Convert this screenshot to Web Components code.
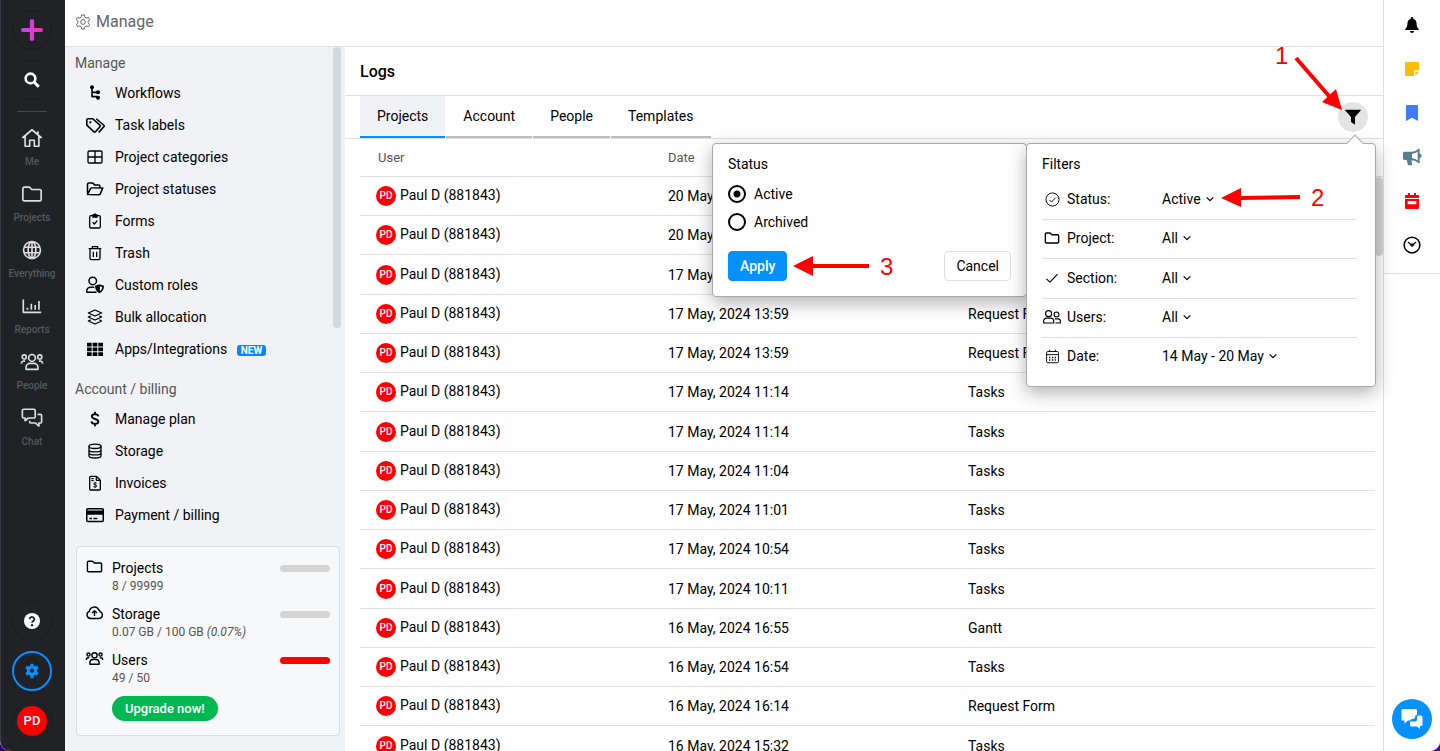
<!DOCTYPE html>
<html lang="en">
<head>
<meta charset="utf-8">
<meta name="viewport" content="width=device-width, initial-scale=1">
<title>Manage - Logs</title>
<style>
    html, body {
        margin: 0;
        height: 100%;
        overflow: hidden;
    }

    body {
        font-family: Roboto, "Liberation Sans", sans-serif;
        font-size: 14px;
        line-height: 20px;
        color: #000;
        background: linear-gradient(90deg, #32006e, #4a0fa8);
        --line: #e0e0e0;
        --blue: #0591ff;
        --panel: #f0f2f5;
        --muted: #555;
    }
</style>
</head>
<body>
<manage-app></manage-app>

<script>
/*
*   Icon shapes, all drawn on a 24 x 24 grid. Outlined by default, solid parts carry class "s".
*/
const ICONS = {
    "plus": `<defs><linearGradient id="g"><stop offset="0" stop-color="#b14dff"/><stop offset="1" stop-color="#ff2fa0"/></linearGradient></defs><path d="M9.700 2.300a2.300 2.300 0 0 1 4.600 0V9.700h7.400a2.300 2.300 0 0 1 0 4.600h-7.400v7.400a2.300 2.300 0 0 1-4.600 0v-7.400H2.300a2.300 2.300 0 0 1 0-4.600h7.400z" fill="url(#g)" stroke="none"/>`,
    "search": `<circle cx="10" cy="10" r="6.500" stroke-width="3.400"/><path d="M15 15l6 6" stroke-width="4"/>`,
    "home": `<path d="M1.500 12L12 3l10.500 9M18.500 8V4.500M4.500 10v11h5v-6.500h5V21h5V10"/>`,
    "folder": `<path d="M2 6a1.500 1.500 0 0 1 1.500-1.500h5.700l2.600 2.600h8.700A1.500 1.500 0 0 1 22 8.600v9.400a1.500 1.500 0 0 1-1.500 1.500h-17A1.500 1.500 0 0 1 2 18z"/>`,
    "globe": `<circle cx="12" cy="12" r="9.200"/><ellipse cx="12" cy="12" rx="4.200" ry="9.200"/><path d="M3.500 9h17M3.500 15h17M12 3v18"/>`,
    "reports": `<path d="M2.500 5v14H22M7 16v-2M11.300 16v-6.500M15.500 16v-5M19.600 16V6.500"/>`,
    "people": `<circle cx="12" cy="7.500" r="3.700"/><circle cx="3.500" cy="6.500" r="2.200"/><circle cx="20.500" cy="6.500" r="2.200"/><path d="M5.500 20v-2a4.500 4.500 0 0 1 4.500-4.500h4a4.500 4.500 0 0 1 4.500 4.500v2zM.500 14v-.500a2.500 2.500 0 0 1 3-2.500h1M23.500 14v-.500a2.500 2.500 0 0 0-3-2.500h-1"/>`,
    "chat": `<path d="M3 2.500h11A1.500 1.500 0 0 1 15.500 4v6.500A1.500 1.500 0 0 1 14 12H8l-3.500 3v-3H3a1.500 1.500 0 0 1-1.500-1.500V4A1.500 1.500 0 0 1 3 2.500zM18 8h3a1.500 1.500 0 0 1 1.500 1.500V16a1.500 1.500 0 0 1-1.500 1.500h-1.500v3.500L16 17.500h-5A1.500 1.500 0 0 1 9.500 16v-1"/>`,
    "help": `<circle class="s" cx="12" cy="12" r="12"/><path d="M8.500 9.300a3.500 3.300 0 1 1 5.500 2.700c-1.300.9-2 1.200-2 2.700" stroke="#202226" stroke-width="2.600"/><circle cx="12" cy="18.300" r="1.800" fill="#202226" stroke="none"/>`,
    "gear-solid": `<path class="s" fill-rule="evenodd" d="M10 1h4l.7 3.200 2 1.100 3.200-1 2 3.500-2.400 2.200v2.900l2.400 2.200-2 3.500-3.200-1-2 1.100L14 23h-4l-.7-4.300-2-1.100-3.200 1-2-3.500 2.400-2.200V10L2.100 7.800l2-3.500 3.200 1 2-1.100zM12 8.200a3.300 3.300 0 1 0 .01 0z"/>`,
    "gear": `<path d="M10 1.500h4l.7 3.200 2.200 1.300 3.100-1 2 3.500-2.400 2.200v2.600l2.400 2.200-2 3.500-3.100-1-2.200 1.300-.7 3.200h-4l-.7-3.200-2.200-1.300-3.100 1-2-3.500 2.400-2.200v-2.600L2 8.500 4 5l3.100 1 2.200-1.300z"/><circle cx="12" cy="12" r="3.500"/>`,
    "workflow": `<path d="M7.500 3v14.500h8.500M7.500 11h8.500" stroke-width="2.400"/><circle class="s" cx="7.500" cy="3.500" r="3"/><circle class="s" cx="16.500" cy="11" r="3"/><circle class="s" cx="16.500" cy="19" r="3"/>`,
    "tags": `<path d="M1 5a1.500 1.500 0 0 1 1.500-1.500H8.500L17.500 11.500a1.500 1.500 0 0 1 0 2.200L12 19.800a1.500 1.500 0 0 1-2.200 0L1 11.500z"/><path d="M13 3.500l9.500 8.200c.7.600.7 1.200 0 1.800L16 20.800"/><circle class="s" cx="5.500" cy="8" r="1.400"/>`,
    "grid": `<rect x="1.500" y="3" width="21" height="18" rx="2"/><path d="M12 3v18M1.500 12h21"/>`,
    "folder-open": `<path d="M2 18V5.500A1.500 1.500 0 0 1 3.500 4H9l2.500 2.500H17A1.500 1.500 0 0 1 18.500 8v2.500M2 19.500l4-8a2 2 0 0 1 1.700-1H22.500l-3.500 8a2 2 0 0 1-1.800 1.200z"/>`,
    "form": `<rect x="4" y="4" width="16" height="18.500" rx="2"/><path class="s" d="M8 2h2.500a1.500 1.500 0 0 1 3 0H16v5H8z"/><path d="M8.500 14l2.500 2.500 4.500-5"/>`,
    "trash": `<path d="M2.500 5.500h19M8 5V2.500h8V5M4.500 5.500V20a2 2 0 0 0 2 2h11a2 2 0 0 0 2-2V5.500M9.500 10v8M14.500 10v8"/>`,
    "roles": `<circle cx="9" cy="6.500" r="5"/><path d="M14 21.500H1V20a5 5 0 0 1 5-5h5"/><path class="s" fill-rule="evenodd" d="M18 11l6 2c0 5-2 8-6 10-4-2-6-5-6-10zM18.500 13.500v6.500c2-1.300 3-3 3-5.500z"/>`,
    "layers": `<path d="M2 6l10-4.500L22 6l-10 4.500zM5.500 10.200L2 12l10 4.500L22 12l-3.500-1.800M5.500 16.200L2 18l10 4.500L22 18l-3.500-1.800"/>`,
    "apps": `<path class="s" d="M0 2.500h7v5.700H0zM8.500 2.500h7v5.700h-7zM17 2.500h7v5.700h-7zM0 9.700h7v5.700H0zM8.500 9.700h7v5.700h-7zM17 9.700h7v5.700h-7zM0 16.800h7v5.700H0zM8.500 16.800h7v5.700h-7zM17 16.800h7v5.700h-7z"/>`,
    "dollar": `<path d="M17 8.200C16.700 6 15 4.900 12 4.900S7.300 6.200 7.300 8.300 9 11.200 12 12s5 1.700 5 3.900-2 3.500-5 3.500-5-1.300-5.300-3.700M12 1v4M12 19v4" stroke-width="2.800"/>`,
    "database": `<ellipse cx="12" cy="5" rx="9" ry="3.300"/><path d="M3 5v14c0 1.800 4 3.500 9 3.500s9-1.700 9-3.500V5M3 10c0 1.800 4 3.300 9 3.300s9-1.500 9-3.300M3 14.500c0 1.800 4 3.300 9 3.300s9-1.500 9-3.300"/>`,
    "invoice": `<path d="M4 3.500A1.500 1.500 0 0 1 5.500 2H14l6 6v13a1.500 1.500 0 0 1-1.500 1.500h-13A1.500 1.500 0 0 1 4 21zM14 2v6h6M6.500 5.500H10M6.500 8.500H10"/><path d="M14.500 12.500c-.5-1-4.700-1.200-4.700.8s5 1 5 3.200-4.500 1.900-5.300.7M12.200 10.500v9" stroke-width="1.300"/>`,
    "card": `<rect x="1" y="3.500" width="22" height="17" rx="1.500"/><path class="s" d="M1 6h22v5.500H1z"/><path d="M4.500 16.500H8M10 16.500h5"/>`,
    "cloud": `<path d="M6.500 20.500a5.300 5.300 0 0 1-1.800-10.200A7 7 0 0 1 17.800 8a5 5 0 0 1 2 2.800 5 5 0 0 1-1.300 9.700zM12 17v-7M8.500 12.800L12 9.500l3.500 3.300"/>`,
    "filter": `<path class="s" d="M.500 1h23c.5 0 .7.500.3 1L15 12v11.500l-6-4V12L.2 2C-.1 1.500 0 1 .500 1z"/>`,
    "circle-check": `<circle cx="12" cy="12" r="10.500"/><path d="M7 12.500l3.500 3.500L17 9"/>`,
    "check": `<path d="M2.500 13.500L8.500 19 21.500 5.500"/>`,
    "users": `<circle cx="7.500" cy="7.500" r="4"/><circle cx="18" cy="8.500" r="3.200"/><path d="M.800 20v-2.500a4 4 0 0 1 4-4h5.500a4 4 0 0 1 4 4V20zM16.500 20h6.700v-2.500a3 3 0 0 0-3-3H16"/>`,
    "calendar": `<rect x="2.500" y="4" width="19" height="18" rx="2"/><path d="M2.500 9h19M7.500 1v3M16.500 1v3"/><path d="M6.500 13.500h2M11 13.500h2M15.500 13.500h2M6.500 17.500h2M11 17.500h2M15.500 17.500h2" stroke-width="2.300"/>`,
    "chevron": `<path d="M4 8l8 8 8-8"/>`,
    "bell": `<path class="s" d="M12 0a1.800 1.800 0 0 1 1.800 1.800v.8c3.400.9 5 3.600 5 6.900 0 4 1 6.500 3.200 8.500.5.500.2 1.500-.7 1.500H2.700c-.9 0-1.200-1-.7-1.500 2.200-2 3.200-4.500 3.200-8.500 0-3.300 1.600-6 5-6.900v-.8A1.800 1.800 0 0 1 12 0zM9 21h6a3 3 0 0 1-6 0z"/>`,
    "note": `<path class="s" d="M2.500 1.500h19a1 1 0 0 1 1 1V14H15v8.500H2.500a1 1 0 0 1-1-1v-19a1 1 0 0 1 1-1zM17 16h5.500L17 22z"/>`,
    "bookmark": `<path class="s" d="M3 1.500A1.500 1.500 0 0 1 4.500 0h15A1.500 1.500 0 0 1 21 1.500V24l-9-5-9 5z"/>`,
    "megaphone": `<path class="s" fill-rule="evenodd" d="M1.500 5H11c4 0 7-1.500 9.500-4a1 1 0 0 1 1.700.7v6a2.500 2.500 0 0 1 0 5.500v6.500a1 1 0 0 1-1.700.7c-2.500-2.500-5.500-4-9-4l.5 5.500c0 .7-.3 1.100-1 1.100H7.500c-.6 0-1-.300-1.100-1L5 16H2.500A2.500 2.500 0 0 1 0 13.500v-6C0 6 .5 5 1.500 5zM12 7.500v6c3 .2 5.500 1.300 7.500 3V4.500c-2 1.800-4.500 2.800-7.500 3z"/>`,
    "calendar-solid": `<path class="s" fill-rule="evenodd" d="M6 0h3v3h6V0h3v3h3.500a1 1 0 0 1 1 1v3.500h-21V4a1 1 0 0 1 1-1H6zM1.500 9h21v13a2 2 0 0 1-2 2h-17a2 2 0 0 1-2-2zM5.500 12v5h13v-5z"/>`,
    "clock": `<circle cx="12" cy="12" r="10.500"/><path d="M6.500 8l5.500 4.500L17.500 8" stroke-width="1.500"/><path class="s" d="M9.500 10h5.500v2.500L12 15l-2.500-2.500z" opacity=".75"/>`,
    "chat-solid": `<path class="s" d="M3 2h12.500A1.500 1.500 0 0 1 17 3.500V8a2 2 0 0 0-2 2 2 2 0 0 1-2 2h-.5a3 3 0 0 0-2.700 1.500H8L4.500 16.500v-3H3A1.500 1.500 0 0 1 1.500 12V3.500A1.500 1.500 0 0 1 3 2zM18.500 8.500H21a1.500 1.500 0 0 1 1.500 1.500v7.500A1.500 1.500 0 0 1 21 19h-1v3L17 19.500h-5.500A1.500 1.500 0 0 1 10 18v-3.500h4.500a2.500 2.500 0 0 0 2.500-2.500v-2a1.500 1.500 0 0 1 1.500-1.500z"/>`
};

// Small helper so every component gets an open shadow root the same way
class BaseElement extends HTMLElement {
    constructor() {
        super();
        this.attachShadow({ mode: "open" });
    }

    connectedCallback() {
        this.shadowRoot.innerHTML = `
            <style>
                * { box-sizing: border-box; }
                a { color: inherit; text-decoration: none; }
                button, input, select { font: inherit; color: inherit; cursor: pointer; }
                button { border: 0; padding: 0; background: none; }
            </style>
            ${this.render()}
        `;
    }

    attr(name, fallback = "") {
        return this.getAttribute(name) || fallback;
    }
}

// <ui-icon name="" size="" stroke="">
class UiIcon extends BaseElement {
    render() {
        const size = this.attr("size", "18");
        return `
            <style>
                :host { display: inline-flex; flex: none; justify-content: center; }
                svg { display: block; overflow: visible; }
                .s { fill: currentColor; stroke: none; }
            </style>
            <svg width="${size}" height="${size}" viewBox="0 0 24 24" fill="none" stroke="currentColor"
                stroke-width="${this.attr("stroke", "2")}" stroke-linejoin="round" aria-hidden="true">
                ${ICONS[this.attr("name")]}
            </svg>
        `;
    }
}

class UserAvatar extends BaseElement {
    render() {
        return `
            <style>
                :host {
                    display: inline-flex;
                    flex: none;
                    align-items: center;
                    justify-content: center;
                    width: 20px;
                    height: 20px;
                    border-radius: 50%;
                    background: #f00;
                    color: #fff;
                    font-size: 10px;
                    font-weight: 500;
                }

                :host([large]) {
                    width: 30px;
                    height: 30px;
                    font-size: 13px;
                }
            </style>
            <slot></slot>
        `;
    }
}

class RailItem extends BaseElement {
    render() {
        return `
            <style>
                :host { display: block; }

                a {
                    display: flex;
                    flex-direction: column;
                    align-items: center;
                    gap: 3px;
                    height: 56px;
                    color: #dedede;
                }

                span {
                    font-size: 10px;
                    font-weight: 500;
                    color: #55585c;
                }
            </style>
            <a href="#">
                <ui-icon name="${this.attr("icon")}" size="22" stroke="1.8"></ui-icon>
                <span><slot></slot></span>
            </a>
        `;
    }
}

class AppRail extends BaseElement {
    render() {
        return `
            <style>
                :host {
                    display: flex;
                    flex-direction: column;
                    flex: none;
                    align-items: center;
                    width: 65px;
                    padding: 10px 2px 10px 0;
                    border-left: 1px solid #3a3b40;
                    border-bottom-left-radius: 10px;
                    background: #202226;
                    color: #fff;
                    box-sizing: border-box;
                }

                .round {
                    display: flex;
                    align-items: center;
                    justify-content: center;
                    width: 40px;
                    height: 40px;
                    margin-bottom: 10px;
                    border-radius: 50%;
                    border: 1px solid #1c1d21;
                }

                .round.active {
                    border: 2px solid var(--blue);
                    color: var(--blue);
                }

                .round:last-child { margin-bottom: 0; }

                hr {
                    width: 30px;
                    margin: 1px 0 15px;
                    border: 0;
                    border-top: 1px solid #45474b;
                }

                nav {
                    flex: 1;
                    width: 100%;
                }
            </style>
            <button class="round" aria-label="Add"><ui-icon name="plus" size="22"></ui-icon></button>
            <button class="round" aria-label="Search"><ui-icon name="search" size="18"></ui-icon></button>
            <hr>
            <nav>
                <rail-item icon="home">Me</rail-item>
                <rail-item icon="folder">Projects</rail-item>
                <rail-item icon="globe">Everything</rail-item>
                <rail-item icon="reports">Reports</rail-item>
                <rail-item icon="people">People</rail-item>
                <rail-item icon="chat">Chat</rail-item>
            </nav>
            <button class="round" aria-label="Help"><ui-icon name="help" size="16"></ui-icon></button>
            <button class="round active" aria-label="Settings"><ui-icon name="gear-solid" size="16"></ui-icon></button>
            <button class="round" aria-label="Profile"><user-avatar large>PD</user-avatar></button>
        `;
    }
}

class SideLink extends BaseElement {
    render() {
        return `
            <style>
                :host { display: block; }

                a {
                    display: flex;
                    align-items: center;
                    gap: 10px;
                    height: 32px;
                    padding-left: 10px;
                }

                ui-icon { width: 20px; }

                ::slotted(b) {
                    margin-left: 6px;
                    padding: 0 4px;
                    border-radius: 3px;
                    background: #0a84ff;
                    color: #fff;
                    font-size: 10px;
                    line-height: 11px;
                }
            </style>
            <a href="#"><ui-icon name="${this.attr("icon")}" size="${this.attr("size", "16")}"></ui-icon><span><slot></slot></span></a>
        `;
    }
}

class UsageMeter extends BaseElement {
    render() {
        return `
            <style>
                :host {
                    display: flex;
                    gap: 10px;
                }

                .text {
                    flex: 1;
                    line-height: 20px;
                }

                ui-icon { width: 16px; }

                small {
                    display: block;
                    font-size: 12px;
                    line-height: 16px;
                    color: var(--muted);
                }

                .bar {
                    width: 50px;
                    height: 7px;
                    margin-top: 7px;
                    border-radius: 4px;
                    background: #d4d4d4;
                    overflow: hidden;
                }

                :host([full]) .bar { background: #f00; }
            </style>
            <ui-icon name="${this.attr("icon")}" size="17"></ui-icon>
            <div class="text">${this.attr("label")}<small><slot></slot></small></div>
            <div class="bar"></div>
        `;
    }
}

class ManageSidebar extends BaseElement {
    render() {
        return `
            <style>
                :host {
                    display: block;
                    position: relative;
                    flex: none;
                    width: 280px;
                    padding: 0 5px 0 10px;
                    background: var(--panel);
                    box-sizing: border-box;
                }

                h2 {
                    margin: 0;
                    padding: 6px 0 4px;
                    font-size: 14px;
                    font-weight: 400;
                    color: var(--muted);
                }

                nav + h2 { margin-top: 8px; }

                .usage {
                    display: flex;
                    flex-direction: column;
                    gap: 10px;
                    margin: 15px 0 0 1px;
                    padding: 11px 9px 14px;
                    border: 1px solid #dadce0;
                    border-radius: 4px;
                    background: #f7f8fa;
                }

                .upgrade {
                    align-self: flex-start;
                    height: 25px;
                    margin-left: 26px;
                    padding: 0 13px;
                    border-radius: 13px;
                    background: #00b851;
                    color: #fff;
                    font-size: 13px;
                    font-weight: 500;
                    line-height: 24px;
                }

                .scrollbar {
                    position: absolute;
                    top: 0;
                    right: 4px;
                    width: 8px;
                    height: 281px;
                    border-radius: 4px;
                    background: #d7d8da;
                }
            </style>
            <h2>Manage</h2>
            <nav>
                <side-link icon="workflow">Workflows</side-link>
                <side-link icon="tags" size="19">Task labels</side-link>
                <side-link icon="grid">Project categories</side-link>
                <side-link icon="folder-open" size="18">Project statuses</side-link>
                <side-link icon="form">Forms</side-link>
                <side-link icon="trash">Trash</side-link>
                <side-link icon="roles" size="18">Custom roles</side-link>
                <side-link icon="layers">Bulk allocation</side-link>
                <side-link icon="apps">Apps/Integrations <b>NEW</b></side-link>
            </nav>
            <h2>Account / billing</h2>
            <nav>
                <side-link icon="dollar">Manage plan</side-link>
                <side-link icon="database">Storage</side-link>
                <side-link icon="invoice">Invoices</side-link>
                <side-link icon="card" size="18">Payment / billing</side-link>
            </nav>
            <section class="usage">
                <usage-meter icon="folder" label="Projects">8 / 99999</usage-meter>
                <usage-meter icon="cloud" label="Storage">0.07 GB / 100 GB <i>(0.07%)</i></usage-meter>
                <usage-meter icon="people" label="Users" full>49 / 50</usage-meter>
                <button class="upgrade">Upgrade now!</button>
            </section>
            <div class="scrollbar"></div>
        `;
    }
}

class LogTable extends BaseElement {
    render() {
        const rows = this.logs.map(([date, type]) => `
            <tr>
                <td><div class="user"><user-avatar>PD</user-avatar><span>Paul D (881843)</span></div></td>
                <td>${date}</td>
                <td>${type}</td>
            </tr>
        `).join("");

        return `
            <style>
                :host {
                    display: flex;
                    flex: 1;
                    min-height: 0;
                    overflow: hidden;
                    padding-left: 15px;
                }

                table {
                    flex: 1;
                    table-layout: fixed;
                    border-collapse: separate;
                    border-spacing: 0;
                }

                .user-col { width: 290px; }
                .date-col { width: 300px; }

                th, td {
                    height: 39px;
                    padding: 0 18px;
                    border-bottom: 1px solid var(--line);
                    text-align: left;
                }

                th {
                    height: 38px;
                    font-size: 13px;
                    font-weight: 400;
                    color: var(--muted);
                }

                td:first-child { padding-left: 16px; }
                tr:nth-child(4n + 3) td { height: 40px; }

                .user {
                    display: flex;
                    align-items: center;
                    gap: 4px;
                }

                .user span { padding-bottom: 2px; }

                .track {
                    width: 8px;
                    margin-top: 37px;
                    border-top: 1px solid var(--line);
                }

                .track div {
                    height: 79px;
                    border-radius: 4px;
                    background: #d7d7d7;
                }
            </style>
            <table>
                <colgroup><col class="user-col"><col class="date-col"><col></colgroup>
                <thead>
                    <tr><th>User</th><th>Date</th><th></th></tr>
                </thead>
                <tbody>${rows}</tbody>
            </table>
            <div class="track"><div></div></div>
        `;
    }

    get logs() {
        return [
            ["20 May, 2024 10:14", "Tasks"],
            ["20 May, 2024 10:12", "Tasks"],
            ["17 May, 2024 13:59", "Tasks"],
            ["17 May, 2024 13:59", "Request Form"],
            ["17 May, 2024 13:59", "Request Form"],
            ["17 May, 2024 11:14", "Tasks"],
            ["17 May, 2024 11:14", "Tasks"],
            ["17 May, 2024 11:04", "Tasks"],
            ["17 May, 2024 11:01", "Tasks"],
            ["17 May, 2024 10:54", "Tasks"],
            ["17 May, 2024 10:11", "Tasks"],
            ["16 May, 2024 16:55", "Gantt"],
            ["16 May, 2024 16:54", "Tasks"],
            ["16 May, 2024 16:14", "Request Form"],
            ["16 May, 2024 15:32", "Tasks"]
        ];
    }
}

class StatusPanel extends BaseElement {
    render() {
        return `
            <style>
                :host {
                    display: block;
                    width: 315px;
                    padding: 10px 15px 15px;
                    border: 1px solid #aaa;
                    border-radius: 4px;
                    background: #fff;
                    box-shadow: 0 6px 18px rgba(0, 0, 0, 0.3);
                    box-sizing: border-box;
                }

                fieldset {
                    margin: 0;
                    padding: 0;
                    border: 0;
                }

                legend {
                    padding: 0;
                    margin-bottom: 6px;
                }

                label {
                    display: flex;
                    align-items: center;
                    gap: 8px;
                    height: 28px;
                }

                input {
                    appearance: none;
                    width: 18px;
                    height: 18px;
                    margin: 0;
                    border: 2px solid #000;
                    border-radius: 50%;
                }

                input:checked { background: radial-gradient(circle, #000 3px, transparent 4px); }

                .actions {
                    display: flex;
                    justify-content: space-between;
                    margin-top: 15px;
                }

                button {
                    height: 30px;
                    padding: 0 11px;
                    border: 1px solid var(--line);
                    border-radius: 4px;
                    background: #fff;
                }

                .apply {
                    border-color: var(--blue);
                    background: var(--blue);
                    color: #fff;
                    font-weight: 500;
                }
            </style>
            <fieldset>
                <legend>Status</legend>
                <label><input type="radio" name="status" checked>Active</label>
                <label><input type="radio" name="status">Archived</label>
            </fieldset>
            <div class="actions">
                <button class="apply">Apply</button>
                <button>Cancel</button>
            </div>
        `;
    }
}

class FilterRow extends BaseElement {
    render() {
        return `
            <style>
                :host {
                    display: flex;
                    align-items: center;
                    height: 39px;
                    padding-bottom: 2px;
                    border-bottom: 1px solid var(--line);
                    box-sizing: border-box;
                }

                :host(:nth-of-type(3)) { height: 40px; }

                :host(:last-of-type) {
                    height: 38px;
                    border-bottom: 0;
                }

                .icon { width: 20px; }

                label {
                    width: 95px;
                    margin-left: 5px;
                }

                select {
                    appearance: none;
                    field-sizing: content;
                    margin: 0 4px 0 0;
                    padding: 0;
                    border: 0;
                    background: none;
                }
            </style>
            <ui-icon class="icon" name="${this.attr("icon")}" size="${this.attr("size", "14")}" stroke="${this.attr("stroke", "2")}"></ui-icon>
            <label for="value">${this.attr("label")}</label>
            <select id="value"><option>${this.attr("value")}</option></select>
            <ui-icon name="chevron" size="10" stroke="3"></ui-icon>
        `;
    }
}

class FilterPanel extends BaseElement {
    render() {
        return `
            <style>
                :host {
                    display: block;
                    position: relative;
                    width: 350px;
                    padding: 10px 18px 10px 15px;
                    border: 1px solid #aaa;
                    border-radius: 4px;
                    background: #fff;
                    box-shadow: 0 6px 18px rgba(0, 0, 0, 0.3);
                    box-sizing: border-box;
                }

                h3 {
                    margin: 0 0 7px;
                    font-size: 14px;
                    font-weight: 400;
                }

                /* little pointer towards the filter button */
                .tip {
                    position: absolute;
                    top: -7px;
                    right: 14px;
                    width: 12px;
                    height: 12px;
                    border: 1px solid #aaa;
                    border-width: 1px 0 0 1px;
                    background: #fff;
                    transform: rotate(45deg);
                }
            </style>
            <div class="tip"></div>
            <h3>Filters</h3>
            <filter-row icon="circle-check" size="15" stroke="1.5" label="Status:" value="Active"></filter-row>
            <filter-row icon="folder" size="16" label="Project:" value="All"></filter-row>
            <filter-row icon="check" label="Section:" value="All"></filter-row>
            <filter-row icon="users" size="18" stroke="1.5" label="Users:" value="All"></filter-row>
            <filter-row icon="calendar" size="15" stroke="1.5" label="Date:" value="14 May - 20 May"></filter-row>
        `;
    }
}

// Numbered arrows that walk the reader through the filter
class StepCallouts extends BaseElement {
    render() {
        return `
            <style>
                :host {
                    display: block;
                    pointer-events: none;
                }

                svg { display: block; }

                text {
                    font: 24px "Liberation Sans", Arial, sans-serif;
                    fill: #f00;
                }
            </style>
            <svg width="600" height="240" viewBox="0 0 600 240" fill="#f00" stroke="#f00" stroke-width="4">
                <path d="M516 18L549 56"/>
                <path stroke="none" d="M562 70L556 49L542 62z"/>
                <path d="M520 157L460 158"/>
                <path stroke="none" d="M441 158L461 148V167z"/>
                <path d="M89 226H32"/>
                <path stroke="none" d="M13 226L33 216V236z"/>
                <g stroke="none">
                    <text x="495" y="24">1</text>
                    <text x="531" y="166">2</text>
                    <text x="100" y="235">3</text>
                </g>
            </svg>
        `;
    }
}

class LogToolbar extends BaseElement {
    render() {
        return `
            <style>
                :host {
                    display: flex;
                    position: relative;
                    z-index: 1;
                    align-items: center;
                    justify-content: space-between;
                    height: 43px;
                    padding: 0 15px;
                    border-bottom: 1px solid var(--line);
                    box-sizing: border-box;
                }

                .tabs {
                    display: flex;
                    gap: 1px;
                }

                .tabs button {
                    height: 42px;
                    padding: 0 17px;
                    border-bottom: 2px solid #bdbdbd;
                }

                .tabs button[aria-selected="true"] {
                    border-color: var(--blue);
                    background: var(--panel);
                }

                .filter {
                    display: flex;
                    align-items: center;
                    justify-content: center;
                    width: 30px;
                    height: 30px;
                    border-radius: 50%;
                    background: #e4e4e4;
                }

                .popovers {
                    display: flex;
                    position: absolute;
                    top: 47px;
                    right: 7px;
                    align-items: flex-start;
                }

                status-panel { margin-right: -1px; }

                step-callouts {
                    position: absolute;
                    top: -103px;
                    right: -4px;
                }
            </style>
            <div class="tabs" role="tablist">
                <button role="tab" aria-selected="true">Projects</button>
                <button role="tab">Account</button>
                <button role="tab">People</button>
                <button role="tab">Templates</button>
            </div>
            <button class="filter" aria-label="Filter"><ui-icon name="filter" size="16"></ui-icon></button>
            <div class="popovers">
                <status-panel></status-panel>
                <filter-panel></filter-panel>
                <step-callouts></step-callouts>
            </div>
        `;
    }
}

class ToolRail extends BaseElement {
    render() {
        return `
            <style>
                :host {
                    display: flex;
                    flex-direction: column;
                    flex: none;
                    justify-content: space-between;
                    width: 57px;
                    padding-bottom: 12px;
                    border-left: 1px solid var(--line);
                    background: #fff;
                    box-sizing: border-box;
                }

                .tools {
                    display: flex;
                    flex-direction: column;
                    padding: 3px 0 6px;
                    border-bottom: 1px solid var(--line);
                }

                .tools button {
                    display: flex;
                    align-items: center;
                    justify-content: center;
                    height: 44px;
                }

                .chat {
                    display: flex;
                    align-items: center;
                    justify-content: center;
                    align-self: center;
                    width: 40px;
                    height: 40px;
                    border-radius: 50%;
                    background: var(--blue);
                    color: #fff;
                }

                .note { color: #ffbf00; }
                .bookmark { color: #3f7cff; }
                .news { color: #57808f; }
                .calendar { color: #f00; }
            </style>
            <div class="tools">
                <button aria-label="Notifications"><ui-icon name="bell" size="16"></ui-icon></button>
                <button class="note" aria-label="Notes"><ui-icon name="note" size="16"></ui-icon></button>
                <button class="bookmark" aria-label="Bookmarks"><ui-icon name="bookmark" size="16"></ui-icon></button>
                <button class="news" aria-label="Announcements"><ui-icon name="megaphone" size="18"></ui-icon></button>
                <button class="calendar" aria-label="Calendar"><ui-icon name="calendar-solid" size="16"></ui-icon></button>
                <button aria-label="Timer"><ui-icon name="clock" size="18"></ui-icon></button>
            </div>
            <button class="chat" aria-label="Live chat"><ui-icon name="chat-solid" size="24"></ui-icon></button>
        `;
    }
}

class ManageApp extends BaseElement {
    render() {
        return `
            <style>
                :host {
                    display: flex;
                    height: 100vh;
                    border-radius: 0 0 10px 10px;
                    background: #fff;
                    overflow: hidden;
                }

                main {
                    display: flex;
                    flex: 1;
                    flex-direction: column;
                    min-width: 0;
                }

                header {
                    display: flex;
                    align-items: center;
                    gap: 5px;
                    height: 47px;
                    padding: 0 10px 3px;
                    border-bottom: 1px solid var(--line);
                    box-sizing: border-box;
                    color: #666;
                }

                h1 {
                    margin: 0;
                    font-size: 16px;
                    font-weight: 400;
                }

                .body {
                    display: flex;
                    flex: 1;
                    min-height: 0;
                }

                .content {
                    display: flex;
                    flex: 1;
                    flex-direction: column;
                    min-width: 0;
                }

                h2 {
                    margin: 0;
                    padding: 15px 15px 13px;
                    border-bottom: 1px solid var(--line);
                    font-size: 16px;
                    font-weight: 500;
                }
            </style>
            <app-rail></app-rail>
            <main>
                <header><ui-icon name="gear" size="16" stroke="1.5"></ui-icon><h1>Manage</h1></header>
                <div class="body">
                    <manage-sidebar></manage-sidebar>
                    <section class="content">
                        <h2>Logs</h2>
                        <log-toolbar></log-toolbar>
                        <log-table></log-table>
                    </section>
                </div>
            </main>
            <tool-rail></tool-rail>
        `;
    }
}

customElements.define("ui-icon", UiIcon);
customElements.define("user-avatar", UserAvatar);
customElements.define("rail-item", RailItem);
customElements.define("app-rail", AppRail);
customElements.define("side-link", SideLink);
customElements.define("usage-meter", UsageMeter);
customElements.define("manage-sidebar", ManageSidebar);
customElements.define("log-table", LogTable);
customElements.define("status-panel", StatusPanel);
customElements.define("filter-row", FilterRow);
customElements.define("filter-panel", FilterPanel);
customElements.define("step-callouts", StepCallouts);
customElements.define("log-toolbar", LogToolbar);
customElements.define("tool-rail", ToolRail);
customElements.define("manage-app", ManageApp);
</script>
</body>
</html>
